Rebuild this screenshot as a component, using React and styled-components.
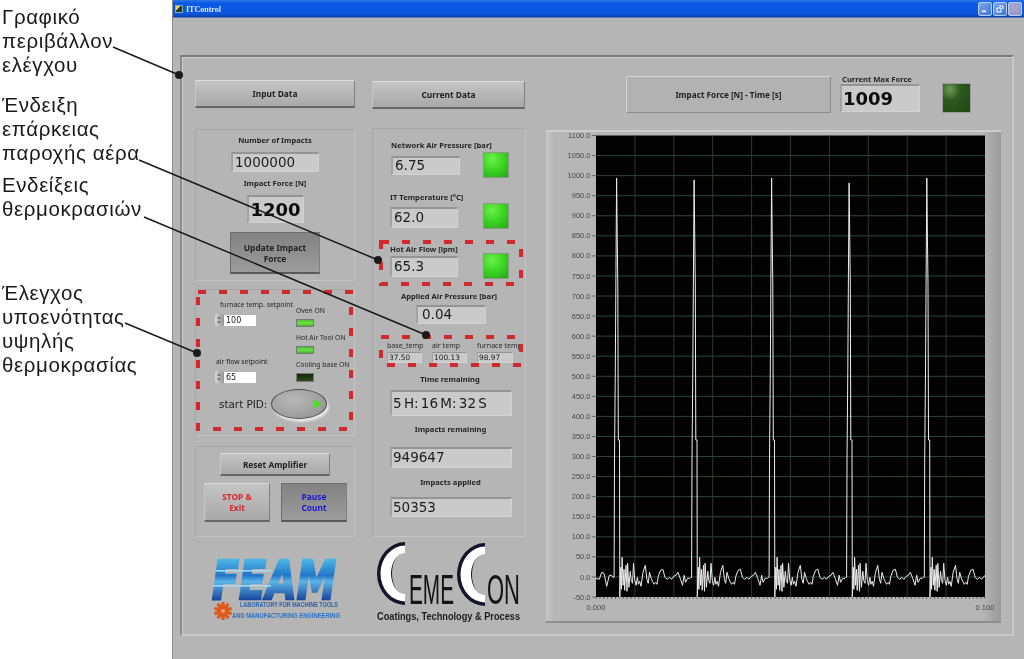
import React from "react";
import styled, { createGlobalStyle } from "styled-components";

const Global = createGlobalStyle`
  html, body { margin: 0; padding: 0; background: #fff; }
  * { box-sizing: border-box; }
`;

const Page = styled.div`
  position: relative;
  width: 1024px;
  height: 659px;
  overflow: hidden;
  display: flex;
  background: #fff;
`;
const Captions = styled.aside`
  width: 172px;
  flex: none;
  padding-left: 2px;
  font: 20.5px/24px "Liberation Sans", Arial, sans-serif;
  letter-spacing: 0.6px;
  color: #1a1a1a;
  filter: blur(0.25px);
`;
const Caption = styled.div`
  margin-top: ${(p) => p.$top}px;
  white-space: pre-line;
`;
const Win = styled.main`
  flex: 1;
  display: flex;
  flex-direction: column;
  background: #b5b5b5;
  border-left: 1px solid #8c8c8c;
  filter: blur(0.35px);
  font-family: "Noto Sans", "DejaVu Sans", sans-serif;
`;
const TitleBar = styled.header`
  height: 18px;
  display: flex;
  align-items: center;
  padding: 0 2px 0 2px;
  background: linear-gradient(180deg, #2f78e6 0, #0a5ae6 3px, #0a55dd 14px, #0a3fa6 17px, #b5b5b5 18px);
  color: #dfe8ff;
  font: bold 8px "Liberation Serif", serif;
`;
const TitleIcon = styled.span`
  width: 8px;
  height: 8px;
  margin-right: 3px;
  background: linear-gradient(135deg, #e8d850 40%, #2a3a2a 41%);
  border: 1px solid #8aa;
`;
const TitleText = styled.span`
  flex: 1;
`;
const WinBtn = styled.span`
  width: 14px;
  height: 14px;
  margin-left: 1px;
  border-radius: 2px;
  border: 1px solid #b8cdf2;
  background: ${(p) => p.$bg};
  display: flex;
  align-items: center;
  justify-content: center;
`;
const Frame = styled.div`
  margin: 37px 10px 23px 7px;
  flex: 1;
  display: flex;
  gap: 0;
  padding-left: 13px;
  border-style: solid;
  border-width: 2px;
  border-color: #7b7b7b #c8c8c8 #c8c8c8 #8a8a8a;
  box-shadow: inset 1px 1px 0 #cfcfcf;
`;
const Column = styled.div`
  width: ${(p) => p.$w}px;
  margin-right: ${(p) => p.$gap || 0}px;
  padding-top: ${(p) => p.$top}px;
  flex: none;
  display: flex;
  flex-direction: column;
`;
const Bevel = styled.button`
  display: block;
  padding: 0;
  width: ${(p) => p.$w}px;
  height: ${(p) => p.$h}px;
  margin: ${(p) => p.$m || "0"};
  flex: none;
  font: ${(p) => p.$fw || 700} 8.4px/11px "Noto Sans", sans-serif;
  color: ${(p) => p.$color || "#222"};
  text-align: center;
  border: 1px solid #7f7f7f;
  border-top-color: ${(p) => p.$dark ? "#6d6d6d" : "#dcdcdc"};
  border-left-color: ${(p) => p.$dark ? "#6d6d6d" : "#c8c8c8"};
  border-bottom: 2px solid ${(p) => p.$dark ? "#5a5a5a" : "#666"};
  background: ${(p) => p.$dark
    ? "linear-gradient(180deg,#828282,#9c9c9c)"
    : "linear-gradient(180deg,#c4c4c4,#a9a9a9)"};
`;
const Panel = styled.section`
  position: relative;
  height: ${(p) => p.$h}px;
  margin-top: ${(p) => p.$top}px;
  flex: none;
  display: flex;
  flex-direction: column;
  border: 1px solid #c4c4c4;
  border-top-color: #a6a6a6;
  border-left-color: #a6a6a6;
  border-radius: 3px;
`;
const CenterStack = styled.div`
  display: flex;
  flex-direction: column;
  align-items: center;
`;
const Label = styled.div`
  font: ${(p) => p.$w || 700} ${(p) => p.$s || 7.6}px/10px "Noto Sans", sans-serif;
  color: #262626;
  white-space: nowrap;
  margin: ${(p) => p.$m || "0"};
`;
const Num = styled.div`
  width: ${(p) => p.$w}px;
  height: ${(p) => p.$h}px;
  margin: ${(p) => p.$m || "0"};
  flex: none;
  display: flex;
  align-items: center;
  padding-left: ${(p) => p.$pad ?? 2}px;
  background: #cacaca;
  color: ${(p) => p.$big ? "#0c0c0c" : "#1c1c1c"};
  font: ${(p) => p.$big ? "700 18px" : `400 ${p.$s || 13.5}px`}/1 "DejaVu Sans", sans-serif;
  word-spacing: -2px;
  border: 1px solid #d2d2d2;
  border-top: ${(p) => p.$tiny ? 1 : 2}px solid #949494;
  border-left: ${(p) => p.$tiny ? 1 : 2}px solid #a2a2a2;
`;
const SetupTop = styled.div`
  display: flex;
  padding: 10px 0 0 19px;
`;
const SetupLeft = styled.div`
  width: 81px;
  flex: none;
`;
const SetupRight = styled.div`
  padding-top: 6px;
`;
const SpinRow = styled.div`
  display: flex;
  align-items: center;
  margin: ${(p) => p.$m || "3px 0 0 0"};
`;
const Spinner = styled.span`
  width: 8px;
  height: 14px;
  border-radius: 4px;
  background: linear-gradient(90deg, #dadada, #989898);
  display: flex;
  flex-direction: column;
  align-items: center;
  justify-content: space-evenly;
`;
const Arrow = styled.i`
  width: 0;
  height: 0;
  border-left: 2px solid transparent;
  border-right: 2px solid transparent;
  ${(p) => p.$up ? "border-bottom: 3px solid #7a7a7a;" : "border-top: 3px solid #7a7a7a;"}
`;
const SetInput = styled.div`
  width: 33px;
  height: 11px;
  background: #fff;
  padding-left: 2px;
  font: 400 8px/11px "DejaVu Sans", sans-serif;
  color: #222;
  border-left: 1px solid #999;
`;
const SmallLed = styled.div`
  width: 18px;
  height: ${(p) => p.$h || 8}px;
  margin: 3px 0 6px;
  border: 1px solid #777;
  background: ${(p) => p.$off
    ? "linear-gradient(180deg,#102a0a,#2c4c1c)"
    : "linear-gradient(180deg,#4fc030,#6ee04a 50%,#45b82c)"};
`;
const PidRow = styled.div`
  display: flex;
  align-items: center;
  padding: 1px 0 0 23px;
`;
const PidText = styled.span`
  font: 400 10.4px/1 "DejaVu Sans", sans-serif;
  color: #222;
  width: 52px;
  white-space: nowrap;
`;
const PidButton = styled.div`
  position: relative;
  width: 56px;
  height: 30px;
  border-radius: 50%;
  border: 1px solid #4e4e4e;
  background: radial-gradient(ellipse at 40% 35%, #b8b8b8, #8f8f8f);
  box-shadow: 2px 3px 2px #e4e4e4;
  display: flex;
  align-items: center;
  justify-content: flex-end;
  padding-right: 4px;
`;
const PidArrow = styled.i`
  width: 0;
  height: 0;
  border-top: 5px solid transparent;
  border-bottom: 5px solid transparent;
  border-left: 8px solid #50dc28;
`;
const BtnRow = styled.div`
  display: flex;
  gap: 11px;
  padding-left: 8px;
  margin-top: 7px;
`;
const BtnCenter = styled.div`
  display: flex;
  justify-content: center;
  padding-top: 6px;
`;
const Sensor = styled.div`
  display: grid;
  grid-template-columns: ${(p) => p.$col}px 26px;
  margin: ${(p) => p.$m};
`;
const SensorLeft = styled.div`
  display: flex;
  flex-direction: column;
  padding-bottom: ${(p) => p.$pb}px;
`;
const BigLed = styled.div`
  width: 26px;
  height: 26px;
  align-self: end;
  border: 1px solid #8a9a84;
  background: radial-gradient(circle at 35% 25%, #6cf04c, #3ad422 50%, #2aa41c);
`;
const Region = styled.div`
  position: relative;
  width: 144px;
  height: ${(p) => p.$h}px;
  margin: ${(p) => p.$m};
  padding: ${(p) => p.$pad};
`;
const DashSvg = styled.svg`
  position: absolute;
  left: 0;
  top: 0;
  overflow: visible;
  pointer-events: none;
`;
const TempGrid = styled.div`
  display: grid;
  grid-template-columns: 35px 35px 36px;
  gap: 2px 10px;
`;
const TempLabel = styled.div`
  font: 400 7.1px/10px "Noto Sans", sans-serif;
  color: #2c2c2c;
  white-space: nowrap;
`;
const TopRow = styled.div`
  display: flex;
  height: 37px;
  padding-left: 80px;
  flex: none;
`;
const ChartTitle = styled.div`
  width: 205px;
  height: 37px;
  display: flex;
  align-items: center;
  justify-content: center;
  font: 700 8.2px "Noto Sans", sans-serif;
  color: #222;
  border: 1px solid #8a8a8a;
  border-top-color: #d6d6d6;
  border-left-color: #d6d6d6;
  background: #b2b2b2;
`;
const MaxBlock = styled.div`
  margin: -2px 0 0 9px;
  width: 80px;
  display: flex;
  flex-direction: column;
`;
const MaxLed = styled.div`
  width: 29px;
  height: 30px;
  margin: 7px 0 0 22px;
  background: radial-gradient(circle at 25% 20%, #6f9a58, #2c5a1c 35%, #1e4612);
  border: 1px solid #9a9a9a;
`;
const Graph = styled.figure`
  margin: 17px 0 0;
  width: 455px;
  height: 493px;
  flex: none;
  background: linear-gradient(90deg, #c6c6c6, #b6b6b6 8px, #b6b6b6 436px, #9a9a9a 455px);
  border-top: 2px solid #cdcdcd;
  border-bottom: 2px solid #8e8e8e;
`;
const LogoBox = styled.svg`
  display: block;
  margin: ${(p) => p.$m};
  flex: none;
  overflow: visible;
`;

function Dash({ w, h }) {
  return (
    <DashSvg width={w} height={h}>
      <rect x="2" y="2" width={w - 4} height={h - 4} fill="none" stroke="#d22a2c" strokeWidth="4" strokeDasharray="8 13" />
    </DashSvg>
  );
}

function Setpoint({ value, m }) {
  return (
    <SpinRow $m={m}>
      <Spinner><Arrow $up /><Arrow /></Spinner>
      <SetInput>{value}</SetInput>
    </SpinRow>
  );
}

const PEAKS = [[616.8, 178], [694.3, 180], [771.8, 178], [849.3, 183], [927, 178]];
const NOISE = [[240,-19],[243,10],[245,-12],[247,20],[250,-8],[253,8],[255,-13],[259,12],[262,-14],[264,14],[268,-10],[272,6],[275,-3],[279,-6],[282,14],[286,-3],[290,-8],[294,0],[297,-7],[301,-4],[305,-9],[311,5],[318,12],[323,-2],[327,-6],[331,5],[336,-1],[340,-4],[345,-7],[350,-5],[354,-7],[358,1],[365,7],[372,8],[378,0],[385,-2],[392,0],[398,-2],[405,1],[412,2],[418,5],[425,-1],[432,-8],[437,2],[441,-5],[448,-1],[455,-1],[458,0]];
const BASE = 577.3;

function signal() {
  const pts = [[168,-1],[178,-2],[185,5],[192,4],[200,-9],[208,2],[215,2],[219,0]].map(([x, u]) => [540 + x / 3, BASE - u]);
  PEAKS.forEach(([pk, top]) => {
    pts.push([pk - 2.7, BASE], [pk - 2.3, 460], [pk - 1.5, 370], [pk - 0.7, 250], [pk - 0.2, top], [pk + 0.3, 225], [pk + 1, 285], [pk + 1.5, 440], [pk + 2.7, 440], [pk + 3, 597]);
    NOISE.forEach(([x, u]) => pts.push([pk + 3 + ((x - 240) / 3) * 0.98, BASE - u]));
  });
  return pts.map((p) => `${p[0].toFixed(1)},${p[1].toFixed(1)}`).join(" ");
}

function Chart() {
  const L = 596, R = 985, T = 135.5, B = 597;
  const yStep = (B - T) / 23;
  const xStep = (R - L) / 10;
  const labels = Array.from({ length: 24 }, (_, i) => ((1100 - i * 50)).toFixed(1));
  return (
    <svg width="455" height="489" viewBox="546 132 455 489" style={{ display: "block" }}>
      <defs>
        <clipPath id="plot"><rect x={L} y={T} width={R - L} height={B - T} /></clipPath>
      </defs>
      <rect x={L} y={T} width={R - L} height={B - T} fill="#020202" />
      {labels.map((t, i) => (
        <g key={t}>
          {i > 0 && i < 23 && <line x1={L} x2={R} y1={T + i * yStep} y2={T + i * yStep} stroke="#3f5544" strokeWidth="0.8" />}
          <line x1={L - 4} x2={L} y1={T + i * yStep} y2={T + i * yStep} stroke="#555" strokeWidth="0.8" />
          <text x={L - 5.5} y={T + i * yStep + 2.6} textAnchor="end" fontFamily="Liberation Sans" fontSize="7.5" fill="#4a4a4a">{t}</text>
        </g>
      ))}
      {Array.from({ length: 9 }, (_, i) => (
        <line key={i} x1={L + (i + 1) * xStep} x2={L + (i + 1) * xStep} y1={T} y2={B} stroke="#2c4232" strokeWidth="0.9" />
      ))}
      {Array.from({ length: 101 }, (_, i) => (
        <line key={i} x1={L + i * xStep / 10} x2={L + i * xStep / 10} y1={B} y2={B + 2} stroke="#444" strokeWidth="0.7" />
      ))}
      <polyline clipPath="url(#plot)" points={signal()} fill="none" stroke="#ececec" strokeWidth="1" strokeLinejoin="round" />
      <text x={L} y="610" textAnchor="middle" fontFamily="Liberation Sans" fontSize="7.5" fill="#4a4a4a">0.000</text>
      <text x={R} y="610" textAnchor="middle" fontFamily="Liberation Sans" fontSize="7.5" fill="#4a4a4a">0.100</text>
    </svg>
  );
}

function Gear({ cx, cy }) {
  const teeth = Array.from({ length: 10 }, (_, i) => i * 36);
  return (
    <g>
      {teeth.map((a) => (
        <rect key={a} x={cx - 1.6} y={cy - 9} width="3.2" height="4" fill="#dc5a1e" transform={`rotate(${a} ${cx} ${cy})`} />
      ))}
      <circle cx={cx} cy={cy} r="6" fill="#dc5a1e" />
      <circle cx={cx} cy={cy} r="2" fill="#f0a070" />
    </g>
  );
}

function FeamLogo() {
  return (
    <LogoBox $m="16px 0 0 5px" width="150" height="72" viewBox="200 553 150 72">
      <defs>
        <linearGradient id="feam" gradientUnits="userSpaceOnUse" x1="0" y1="559" x2="0" y2="600">
          <stop offset="0" stopColor="#4cb8e6" />
          <stop offset="0.4" stopColor="#2276c8" />
          <stop offset="0.55" stopColor="#5cb4e6" />
          <stop offset="1" stopColor="#17469c" />
        </linearGradient>
      </defs>
      <text x="212" y="599" fontFamily="DejaVu Sans" fontWeight="700" fontStyle="oblique" fontSize="54" textLength="124" lengthAdjust="spacingAndGlyphs" fill="url(#feam)" stroke="url(#feam)" strokeWidth="2.6">FEAM</text>
      <rect x="216" y="570" width="56" height="1.6" fill="#a6daf2" />
      <rect x="213" y="585" width="58" height="1.6" fill="#a8daf2" />
      <Gear cx={223} cy={611} />
      <text x="240" y="607" fontFamily="Liberation Sans" fontWeight="700" fontSize="8" textLength="98" lengthAdjust="spacingAndGlyphs" fill="#2a62ac">LABORATORY FOR MACHINE TOOLS</text>
      <text x="232" y="618" fontFamily="Liberation Sans" fontWeight="700" fontSize="8" textLength="108" lengthAdjust="spacingAndGlyphs" fill="#2f72c0">AND MANUFACTURING ENGINEERING</text>
    </LogoBox>
  );
}

function CShape({ dx, dy }) {
  return (
    <g transform={`translate(${dx} ${dy})`}>
      <path d="M405 545 A28 31.5 0 0 0 405 608 L405 598 A13 21.5 0 0 1 405 555 Z" fill="#14142c" />
      <path d="M405 548.5 A24.5 28 0 0 0 405 604.5 L405 597 A14 20.5 0 0 1 405 556 Z" fill="#fff" />
    </g>
  );
}

function CemeconLogo() {
  return (
    <LogoBox $m="0" width="154" height="88" viewBox="372 540 154 88">
      <CShape dx={0} dy={0} />
      <CShape dx={80} dy={1} />
      <text x="409" y="607" fontFamily="Liberation Sans" fontSize="42" textLength="45" lengthAdjust="spacingAndGlyphs" fill="#141414">EME</text>
      <text x="487" y="607" fontFamily="Liberation Sans" fontSize="42" textLength="33" lengthAdjust="spacingAndGlyphs" fill="#141414">ON</text>
      <text x="377" y="623" fontFamily="Liberation Sans" fontWeight="700" fontSize="10" textLength="143" lengthAdjust="spacingAndGlyphs" fill="#1c1c1c">Coatings, Technology &amp; Process</text>
    </LogoBox>
  );
}

const Callouts = styled.svg`
  position: absolute;
  left: 0;
  top: 0;
  pointer-events: none;
  filter: blur(0.3px);
`;

export default function App() {
  return (
    <Page>
      <Global />
      <Captions>
        <Caption $top={5}>{"Γραφικό\nπεριβάλλον\nελέγχου"}</Caption>
        <Caption $top={16}>{"Ένδειξη\nεπάρκειας\nπαροχής αέρα"}</Caption>
        <Caption $top={8}>{"Ενδείξεις\nθερμοκρασιών"}</Caption>
        <Caption $top={60}>{"Έλεγχος\nυποενότητας\nυψηλής\nθερμοκρασίας"}</Caption>
      </Captions>
      <Win>
        <TitleBar>
          <TitleIcon />
          <TitleText>ITControl</TitleText>
          <WinBtn $bg="linear-gradient(135deg,#7fa8ea,#3f74d8)">
            <svg width="8" height="8" viewBox="0 0 8 8"><rect x="1" y="5.5" width="4" height="1.6" fill="#fff" /></svg>
          </WinBtn>
          <WinBtn $bg="linear-gradient(135deg,#7fa8ea,#3f74d8)">
            <svg width="8" height="8" viewBox="0 0 8 8"><path d="M3 1h4v3M1 3h4v4H1z" fill="none" stroke="#fff" strokeWidth="1" /></svg>
          </WinBtn>
          <WinBtn $bg="linear-gradient(135deg,#a6a8d8,#8f94c8)">
            <svg width="8" height="8" viewBox="0 0 8 8"><path d="M1 1l6 6M7 1L1 7" stroke="#b8a8c8" strokeWidth="1.2" /></svg>
          </WinBtn>
        </TitleBar>
        <Frame>
          <Column $w={160} $gap={17} $top={23}>
            <Bevel $w={160} $h={28}>Input Data</Bevel>
            <Panel $h={152} $top={21}>
              <CenterStack>
                <Label $m="5px 0 0">Number of Impacts</Label>
                <Num $w={88} $h={20} $m="7px 0 0">1000000</Num>
                <Label $m="6px 0 0">Impact Force [N]</Label>
                <Num $w={57} $h={28} $m="7px 0 0" $big>1200</Num>
                <Bevel $w={90} $h={42} $m="9px 0 0" $dark>Update Impact<br />Force</Bevel>
              </CenterStack>
            </Panel>
            <Panel $h={147} $top={8}>
              <Dash w={157} h={141} />
              <SetupTop>
                <SetupLeft>
                  <Label $w={400} $s={6.8} $m="0 0 0 5px">furnace temp. setpoint</Label>
                  <Setpoint value="100" />
                  <Label $w={400} $s={6.8} $m="30px 0 0 1px">air flow setpoint</Label>
                  <Setpoint value="65" />
                </SetupLeft>
                <SetupRight>
                  <Label $w={400} $s={6.8}>Oven ON</Label>
                  <SmallLed />
                  <Label $w={400} $s={6.8}>Hot Air Tool ON</Label>
                  <SmallLed />
                  <Label $w={400} $s={6.8}>Cooling base ON</Label>
                  <SmallLed $off $h={9} />
                </SetupRight>
              </SetupTop>
              <PidRow>
                <PidText>start PID:</PidText>
                <PidButton><PidArrow /></PidButton>
              </PidRow>
            </Panel>
            <Panel $h={91} $top={10}>
              <BtnCenter><Bevel $w={110} $h={23}>Reset Amplifier</Bevel></BtnCenter>
              <BtnRow>
                <Bevel $w={66} $h={39} $color="#d8262a">STOP &amp;<br />Exit</Bevel>
                <Bevel $w={66} $h={39} $color="#1a1ac8" $dark>Pause<br />Count</Bevel>
              </BtnRow>
            </Panel>
            <FeamLogo />
          </Column>

          <Column $w={154} $gap={20} $top={24}>
            <Bevel $w={153} $h={28}>Current Data</Bevel>
            <Panel $h={409} $top={19}>
              <Sensor $col={92} $m="11px 0 0 18px">
                <SensorLeft $pb={3}>
                  <Label>Network Air Pressure [bar]</Label>
                  <Num $w={69} $h={19} $m="6px 0 0">6.75</Num>
                </SensorLeft>
                <BigLed />
              </Sensor>
              <Sensor $col={93} $m="14px 0 0 17px">
                <SensorLeft $pb={1}>
                  <Label>IT Temperature [°C]</Label>
                  <Num $w={68} $h={21} $m="5px 0 0">62.0</Num>
                </SensorLeft>
                <BigLed />
              </Sensor>
              <Region $h={46} $m="11px 0 0 6px" $pad="4px 0 0 11px">
                <Dash w={144} h={46} />
                <Sensor $col={93} $m="0">
                  <SensorLeft $pb={2}>
                    <Label>Hot Air Flow [lpm]</Label>
                    <Num $w={68} $h={21} $m="2px 0 0">65.3</Num>
                  </SensorLeft>
                  <BigLed />
                </Sensor>
              </Region>
              <CenterStack>
                <Label $m="5px 0 0">Applied Air Pressure [bar]</Label>
                <Num $w={70} $h={19} $m="4px 0 0 4px" $pad={4}>0.04</Num>
              </CenterStack>
              <Region $h={32} $m="11px 0 0 6px" $pad="5px 0 0 8px">
                <Dash w={144} h={32} />
                <TempGrid>
                  <TempLabel>base_temp</TempLabel>
                  <TempLabel>air temp</TempLabel>
                  <TempLabel>furnace temp</TempLabel>
                  <Num $w={35} $h={11} $s={7.4} $tiny $pad={1}>37.50</Num>
                  <Num $w={35} $h={11} $s={7.4} $tiny $pad={1}>100.13</Num>
                  <Num $w={36} $h={11} $s={7.4} $tiny $pad={1}>98.97</Num>
                </TempGrid>
              </Region>
              <CenterStack>
                <Label $m="7px 0 0 2px">Time remaining</Label>
                <Num $w={122} $h={26} $m="6px 0 0 4px" $pad={1}>5 H: 16 M: 32 S</Num>
                <Label $m="8px 0 0 3px">Impacts remaining</Label>
                <Num $w={122} $h={21} $m="13px 0 0 4px" $pad={1}>949647</Num>
                <Label $m="9px 0 0 3px">Impacts applied</Label>
                <Num $w={122} $h={20} $m="10px 0 0 4px" $pad={1}>50353</Num>
              </CenterStack>
            </Panel>
            <CemeconLogo />
          </Column>

          <Column $w={455} $top={19}>
            <TopRow>
              <ChartTitle>Impact Force [N] - Time [s]</ChartTitle>
              <MaxBlock>
                <Label $m="0 0 0 2px">Current Max Force</Label>
                <Num $w={80} $h={28} $big $pad={1}>1009</Num>
              </MaxBlock>
              <MaxLed />
            </TopRow>
            <Graph><Chart /></Graph>
          </Column>
        </Frame>
      </Win>
      <Callouts width="1024" height="659" viewBox="0 0 1024 659">
        <g stroke="#1a1a1a" strokeWidth="1.5" fill="none">
          <path d="M113 47L179 75" />
          <path d="M139 160L378 260" />
          <path d="M144 217L426 335" />
          <path d="M125 323L197 353" />
        </g>
        <g fill="#1a1a1a">
          <circle cx="179" cy="75" r="4" />
          <circle cx="378" cy="260" r="4" />
          <circle cx="426" cy="335" r="4" />
          <circle cx="197" cy="353" r="4" />
        </g>
      </Callouts>
    </Page>
  );
}
